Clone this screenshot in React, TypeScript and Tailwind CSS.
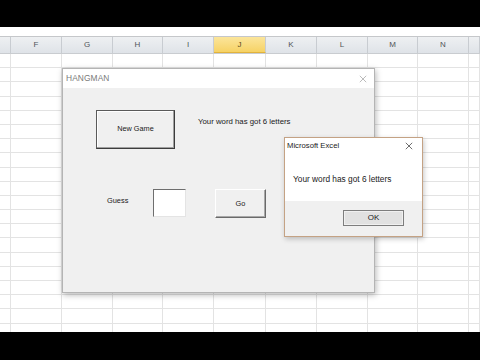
import React from "react";

const columns = [
  { name: "", w: "w-[11px]" },
  { name: "F", w: "w-[51px]" },
  { name: "G", w: "w-[51px]" },
  { name: "H", w: "w-[50px]" },
  { name: "I", w: "w-[51px]" },
  { name: "J", w: "w-[52px]", active: true },
  { name: "K", w: "w-[51px]" },
  { name: "L", w: "w-[51px]" },
  { name: "M", w: "w-[50px]" },
  { name: "N", w: "w-[51px]" },
  { name: "", w: "flex-1" },
];

const rows = Array.from({ length: 21 });

function CloseIcon({ className }: { className?: string }) {
  return (
    <svg viewBox="0 0 10 10" className={className} fill="none" stroke="currentColor" strokeWidth="0.9">
      <path d="M1 1 L9 9 M9 1 L1 9" />
    </svg>
  );
}

export default function App() {
  return (
    <div className="relative w-[480px] h-[360px] overflow-hidden bg-white flex flex-col font-['Liberation_Sans',Arial,sans-serif]">
      {/* letterbox top */}
      <div className="h-[27px] bg-black shrink-0" />
      <div className="h-[10px] bg-white border-b border-[#c5c7ca] shrink-0" />

      {/* column headers */}
      <div className="flex h-[17px] shrink-0 border-b border-[#c9ccd0]">
        {columns.map((c, i) => (
          <div
            key={i}
            className={`${c.w} shrink-0 flex items-center justify-center border-r border-[#c8ccd1] text-[8px] ${
              c.active
                ? "bg-gradient-to-b from-[#fbe59a] to-[#f6d264] text-[#5a4a20] border-b border-b-[#e2b33c]"
                : "bg-gradient-to-b from-[#eef0f2] to-[#dfe3e8] text-[#505458]"
            }`}
          >
            {c.name}
          </div>
        ))}
      </div>

      {/* cells */}
      <div className="flex-1 overflow-hidden">
        {rows.map((_, r) => (
          <div key={r} className="flex h-[14.2px] border-b border-[#e3e3e3]">
            {columns.map((c, i) => (
              <div key={i} className={`${c.w} shrink-0 border-r border-[#e3e3e3]`} />
            ))}
          </div>
        ))}
      </div>

      {/* letterbox bottom */}
      <div className="h-[28px] bg-black shrink-0" />

      {/* HANGMAN userform */}
      <div className="absolute left-[62px] top-[68px] w-[313px] h-[225px] border border-[#b4b4b4] bg-[#f0f0f0] shadow-[1px_2px_6px_rgba(0,0,0,0.28)] flex flex-col">
        <div className="h-[19px] bg-white flex items-center justify-between pl-[3px] pr-[7px] shrink-0">
          <span className="text-[8.4px] text-[#7a7a7a] tracking-[0.1px]">HANGMAN</span>
          <CloseIcon className="w-[8px] h-[8px] text-[#a0a0a0]" />
        </div>
        <div className="flex-1 pt-[22px] pl-[33px] text-[#1a1a1a]">
          <div className="flex items-start">
            <div className="w-[79px] h-[39px] border border-[#5a5a5a] border-r-[#3c3c3c] border-b-[#3c3c3c] shadow-[inset_-1px_-1px_0_#a0a0a0,inset_1px_1px_0_#ffffff] flex items-center justify-center text-[7.3px]">
              New Game
            </div>
            <span className="ml-[23px] mt-[6px] text-[7.8px]">Your word has got 6 letters</span>
          </div>
          <div className="flex items-start mt-[40px]">
            <span className="w-[57px] pl-[11px] mt-[6px] text-[7.4px]">Guess</span>
            <div className="w-[33px] h-[28px] bg-white border border-[#6e6e6e] border-r-[#e4e4e4] border-b-[#e4e4e4]" />
            <div className="ml-[29px] w-[51px] h-[29px] border border-[#ffffff] border-r-[#6a6a6a] border-b-[#6a6a6a] shadow-[inset_-1px_-1px_0_#a8a8a8] flex items-center justify-center text-[7.4px]">
              Go
            </div>
          </div>
        </div>
      </div>

      {/* Microsoft Excel message box */}
      <div className="absolute left-[284px] top-[137px] w-[139px] h-[100px] border border-[#c4a284] bg-white shadow-[1px_2px_5px_rgba(0,0,0,0.22)] flex flex-col text-[#1a1a1a]">
        <div className="h-[16px] flex items-center justify-between pl-[2px] pr-[9px] shrink-0">
          <span className="text-[7.7px]">Microsoft Excel</span>
          <CloseIcon className="w-[8px] h-[8px] text-[#333333]" />
        </div>
        <div className="h-[47px] flex items-center pl-[8px] pt-[4px] shrink-0">
          <span className="text-[8.3px]">Your word has got 6 letters</span>
        </div>
        <div className="flex-1 bg-[#f0f0f0] flex justify-end items-start pt-[9px] pr-[18px]">
          <div className="w-[61px] h-[16px] border border-[#7d7d7d] bg-[#e1e1e1] shadow-[inset_0_0_0_1px_#f0f0f0] flex items-center justify-center text-[8px]">
            OK
          </div>
        </div>
      </div>
    </div>
  );
}
